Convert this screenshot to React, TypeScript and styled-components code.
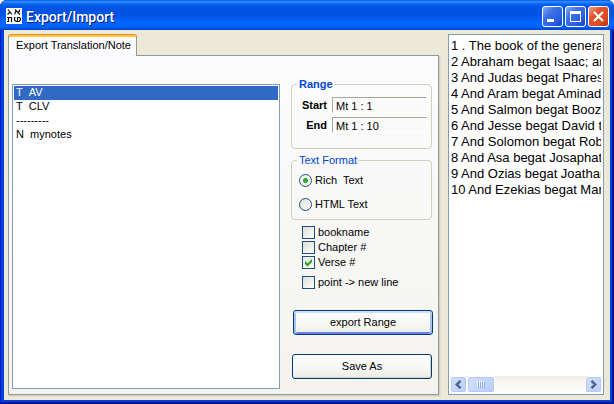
import React, { useState } from "react";
import styled, { createGlobalStyle, css } from "styled-components";

const GlobalStyle = createGlobalStyle`
  * { box-sizing: border-box; }
  body {
    margin: 0;
    background: #fff;
    font-family: "Liberation Sans", Arial, sans-serif;
    font-size: 11px;
    line-height: 13px;
    color: #000;
  }
  button, input, select, textarea { font: inherit; color: inherit; }
`;

const Window = styled.div`
  min-height: 100vh;
  display: flex;
  flex-direction: column;
  padding: 0 4px 4px;
  border-radius: 7px 7px 0 0;
  background: #0040dc;
  box-shadow: inset 1px 0 #0019cf, inset -2px 0 #001590, inset 0 -2px #001590;
  overflow: hidden;
`;

const TitleBar = styled.header`
  height: 30px;
  flex: none;
  display: flex;
  align-items: center;
  gap: 4px;
  margin: 0 -4px;
  padding: 2px 5px 0 6px;
  background: linear-gradient(
    #0058e6 0, #3a93ff 2px, #1270f4 3px, #0058e8 6px, #0053e1 10px,
    #0055e5 16px, #0065fc 22px, #0068ff 26px, #0058e6 28px, #0043cf 30px
  );
`;

const Title = styled.h1`
  flex: 1;
  margin: 0;
  padding-top: 1px;
  font: 500 14px/20px Roboto, "Open Sans", sans-serif;
  color: #fff;
  text-shadow: 1px 1px #0a1883;
`;

const Captions = styled.div`
  display: flex;
  gap: 2px;
`;

const CaptionButton = styled.button<{ $close?: boolean }>`
  width: 21px;
  height: 21px;
  padding: 0;
  border: 1px solid #fff;
  border-radius: 3px;
  background: ${(p) =>
    p.$close
      ? "linear-gradient(135deg, #f0a088 0, #e2532c 35%, #dd4a20 70%, #b83410 100%)"
      : "linear-gradient(135deg, #87a9f5 0, #3c70e8 35%, #2a5fe0 70%, #1745b8 100%)"};
  svg { display: block; }
`;

const Client = styled.main`
  flex: 1;
  display: flex;
  gap: 9px;
  padding: 4px 6px 5px 4px;
  background: #ece9d8;
`;

const TabControl = styled.section`
  flex: 431 1 0;
  min-width: 0;
  display: flex;
  flex-direction: column;
`;

const Tab = styled.button`
  align-self: flex-start;
  height: 21px;
  margin-top: 1px;
  margin-bottom: -1px;
  padding: 0 5px 2px 7px;
  border: 1px solid #919b9c;
  border-top: 2px solid #ffc73c;
  border-bottom: 0;
  border-radius: 3px 3px 0 0;
  background: #fcfcfe;
  box-shadow: 0 -1px #e68b2c;
  z-index: 1;
`;

const TabPanel = styled.div`
  flex: 1;
  display: flex;
  gap: 11px;
  padding: 28px 5px 5px 3px;
  border: 1px solid #919b9c;
  background: linear-gradient(#fcfcfe, #f4f3ee);
  box-shadow: 1px 1px #d0cebf, 2px 2px #e3e0d0;
`;

const NoteList = styled.select`
  flex: 1;
  min-width: 0;
  padding: 1px;
  border: 1px solid #7f9db9;
  border-radius: 0;
  outline: 0;
  background: #fff;
  appearance: none;
  overflow: hidden;

  option {
    height: 14px;
    min-height: 14px;
    padding: 0 2px;
    line-height: 14px;
  }
  option:checked {
    background: #316ac5 linear-gradient(#316ac5, #316ac5);
    color: #fff;
    -webkit-text-fill-color: #fff;
  }
`;

const Options = styled.form`
  width: 142px;
  flex: none;
  display: flex;
  flex-direction: column;
  margin-top: -6px;
`;

const Group = styled.fieldset`
  min-width: 0;
  margin: 0 1px 5px 0;
  padding: 0 4px;
  border: 1px solid #d0d0bf;
  border-radius: 4px;
`;

const Legend = styled.legend<{ $bold?: boolean }>`
  margin-left: 1px;
  padding: 0 2px;
  color: #0046d5;
  font-weight: ${(p) => (p.$bold ? "bold" : "normal")};
`;

const RangeGrid = styled.div`
  display: grid;
  grid-template-columns: 31px 1fr;
  gap: 4px 5px;
  padding: 6px 0 15px;
`;

const RangeLabel = styled.label`
  font-weight: bold;
  line-height: 16px;
  text-align: right;
`;

const RangeInput = styled.input`
  width: 100%;
  min-width: 0;
  height: 16px;
  padding: 1px 3px 0;
  border: 1px solid;
  border-color: #aca899 #fff #fff #aca899;
  background: transparent;
  outline: 0;
`;

const RadioStack = styled.div`
  display: flex;
  flex-direction: column;
  gap: 8px;
  padding: 5px 3px 7px;
`;

const CheckStack = styled.div`
  display: flex;
  flex-direction: column;
  padding: 0 11px;
`;

const Choice = styled.label<{ $apart?: boolean }>`
  display: flex;
  align-items: center;
  gap: 3px;
  height: 15px;
  margin-top: ${(p) => (p.$apart ? "5px" : "0")};
  white-space: pre;

  ${RadioStack} & { height: 16px; }
`;

const mark = css`
  flex: none;
  width: 13px;
  height: 13px;
  margin: 0;
  appearance: none;
  border: 1px solid #1c5180;
  background: linear-gradient(135deg, #dcdcd7, #fff);
`;

const Radio = styled.input`
  ${mark}
  border-radius: 50%;
  &:checked {
    background: radial-gradient(circle, #35c135 0, #21a121 2px, #f6f6f2 3px);
  }
`;

const Check = styled.input`
  ${mark}
  &:checked {
    background: url("data:image/svg+xml,%3Csvg xmlns='http://www.w3.org/2000/svg' viewBox='0 0 11 11'%3E%3Cpath d='M2 4v3l2.500 2.500L9 5V2L4.500 6.500Z' fill='%2321a121'/%3E%3C/svg%3E"),
      linear-gradient(135deg, #e8e8e4, #fff);
  }
`;

const PushButton = styled.button<{ $default?: boolean }>`
  height: 25px;
  margin: ${(p) => (p.$default ? "20px 0 0 2px" : "19px 1px 0")};
  padding: 0 0 1px;
  border: 1px solid #003c74;
  border-radius: 3px;
  background: linear-gradient(#fff, #f4f4f0 70%, #ecebe6);
  box-shadow: ${(p) =>
    p.$default
      ? "inset 0 2px #cee0fb, inset 2px 0 #a9c2ef, inset -2px 0 #a9c2ef, inset 0 -2px #6982ee"
      : "inset -1px -1px #d6d0c5"};
`;

const Preview = styled.section`
  flex: 152 1 0;
  min-width: 0;
  display: flex;
  flex-direction: column;
  padding: 1px;
  border: 1px solid #7f9db9;
  background: #fff;
`;

const Verses = styled.textarea`
  flex: 1;
  min-width: 0;
  margin: 0 1px 0 0;
  padding: 2px 0 2px 1px;
  border: 0;
  outline: 0;
  resize: none;
  overflow: hidden;
  white-space: pre;
  font-size: 13px;
  line-height: 16px;
  background: #fff;
`;

const ScrollBar = styled.div`
  flex: none;
  display: flex;
  height: 17px;
  background: linear-gradient(#eeede5, #f6f5f0 30%, #fefefb);
`;

const ScrollButton = styled.button<{ $thumb?: boolean }>`
  width: ${(p) => (p.$thumb ? "28px" : "17px")};
  height: 17px;
  padding: 0;
  display: grid;
  place-items: center;
  border: 1px solid #fff;
  border-radius: 3px;
  background: linear-gradient(135deg, #d3e0fe, #b9cdfb);
  box-shadow: inset 0 0 0 1px #b4c8f6;
  &:last-child { margin-left: auto; }
`;

const AppIcon = () => (
  <svg width="16" height="16" viewBox="0 0 16 16" aria-hidden="true">
    <rect width="16" height="16" fill="#fff" />
    <g fill="none" stroke="#111" strokeWidth="1.2">
      <path d="M2 1.500L6 6.500M4 4L1.500 6.500M9 1.500L14 6.500M13.500 1.500V3L12 4.500M10 3L9 5V6.500" />
      <path d="M1 9.500H5.500V14M2.500 9.500V13.500H1M8 9.500H9.500M8.500 9.500V12L10 13.500H13L14.500 12V10.500L13.500 9.500H11.500V13.500" />
    </g>
  </svg>
);

const Chevron = ({ right }: { right?: boolean }) => (
  <svg width="9" height="9" viewBox="0 0 9 9" aria-hidden="true">
    <path
      d={right ? "M2.500 0.800L6.200 4.500L2.500 8.200" : "M6.500 0.800L2.800 4.500L6.500 8.200"}
      fill="none"
      stroke="#4d6185"
      strokeWidth="2.400"
    />
  </svg>
);

const notes = ["T\u00a0\u00a0AV", "T\u00a0\u00a0CLV", "---------", "N\u00a0\u00a0mynotes"];

const verses = [
  "1 . The book of the generation of Jesus Christ",
  "2 Abraham begat Isaac; and Isaac begat Jacob",
  "3 And Judas begat Phares and Zara of Thamar",
  "4 And Aram begat Aminadab",
  "5 And Salmon begat Booz of Rachab",
  "6 And Jesse begat David the king",
  "7 And Solomon begat Roboam",
  "8 And Asa begat Josaphat",
  "9 And Ozias begat Joatham",
  "10 And Ezekias begat Manasses",
].join("\n");

export default function App() {
  const [format, setFormat] = useState("rich");
  return (
    <>
      <GlobalStyle />
      <Window>
        <TitleBar>
          <AppIcon />
          <Title>Export/Import</Title>
          <Captions>
            <CaptionButton type="button" aria-label="Minimize">
              <svg width="19" height="19"><path d="M4 12h7v3H4z" fill="#fff" /></svg>
            </CaptionButton>
            <CaptionButton type="button" aria-label="Maximize">
              <svg width="19" height="19">
                <path d="M4 4h11v11H4zM5 7v7h9V7z" fill="#fff" fillRule="evenodd" />
              </svg>
            </CaptionButton>
            <CaptionButton type="button" aria-label="Close" $close>
              <svg width="19" height="19">
                <path d="M5 5l9 9M14 5l-9 9" stroke="#fff" strokeWidth="2.200" />
              </svg>
            </CaptionButton>
          </Captions>
        </TitleBar>
        <Client>
          <TabControl>
            <Tab type="button" role="tab" aria-selected="true">Export Translation/Note</Tab>
            <TabPanel role="tabpanel">
              <NoteList size={4} defaultValue={notes[0]} aria-label="Translations and notes">
                {notes.map((n) => (
                  <option key={n} value={n}>{n}</option>
                ))}
              </NoteList>
              <Options>
                <Group>
                  <Legend $bold>Range</Legend>
                  <RangeGrid>
                    <RangeLabel htmlFor="start">Start</RangeLabel>
                    <RangeInput id="start" defaultValue="Mt 1 : 1" />
                    <RangeLabel htmlFor="end">End</RangeLabel>
                    <RangeInput id="end" defaultValue="Mt 1 : 10" />
                  </RangeGrid>
                </Group>
                <Group>
                  <Legend>Text Format</Legend>
                  <RadioStack>
                    <Choice>
                      <Radio type="radio" name="format" checked={format === "rich"} onChange={() => setFormat("rich")} />
                      {"Rich  Text"}
                    </Choice>
                    <Choice>
                      <Radio type="radio" name="format" checked={format === "html"} onChange={() => setFormat("html")} />
                      HTML Text
                    </Choice>
                  </RadioStack>
                </Group>
                <CheckStack>
                  <Choice><Check type="checkbox" />bookname</Choice>
                  <Choice><Check type="checkbox" />Chapter #</Choice>
                  <Choice><Check type="checkbox" defaultChecked />Verse #</Choice>
                  <Choice $apart><Check type="checkbox" />{"point -> new line"}</Choice>
                </CheckStack>
                <PushButton type="button" $default>export Range</PushButton>
                <PushButton type="button">Save As</PushButton>
              </Options>
            </TabPanel>
          </TabControl>
          <Preview>
            <Verses wrap="off" readOnly value={verses} aria-label="Preview" />
            <ScrollBar>
              <ScrollButton type="button" aria-label="Scroll left"><Chevron /></ScrollButton>
              <ScrollButton type="button" aria-label="Scroll position" $thumb>
                <svg width="9" height="7" aria-hidden="true">
                  <path d="M0.500 0v6M2.500 0v6M4.500 0v6M6.500 0v6" stroke="#eef4fe" />
                  <path d="M1.500 1v6M3.500 1v6M5.500 1v6M7.500 1v6" stroke="#8cb0f8" />
                </svg>
              </ScrollButton>
              <ScrollButton type="button" aria-label="Scroll right"><Chevron right /></ScrollButton>
            </ScrollBar>
          </Preview>
        </Client>
      </Window>
    </>
  );
}
